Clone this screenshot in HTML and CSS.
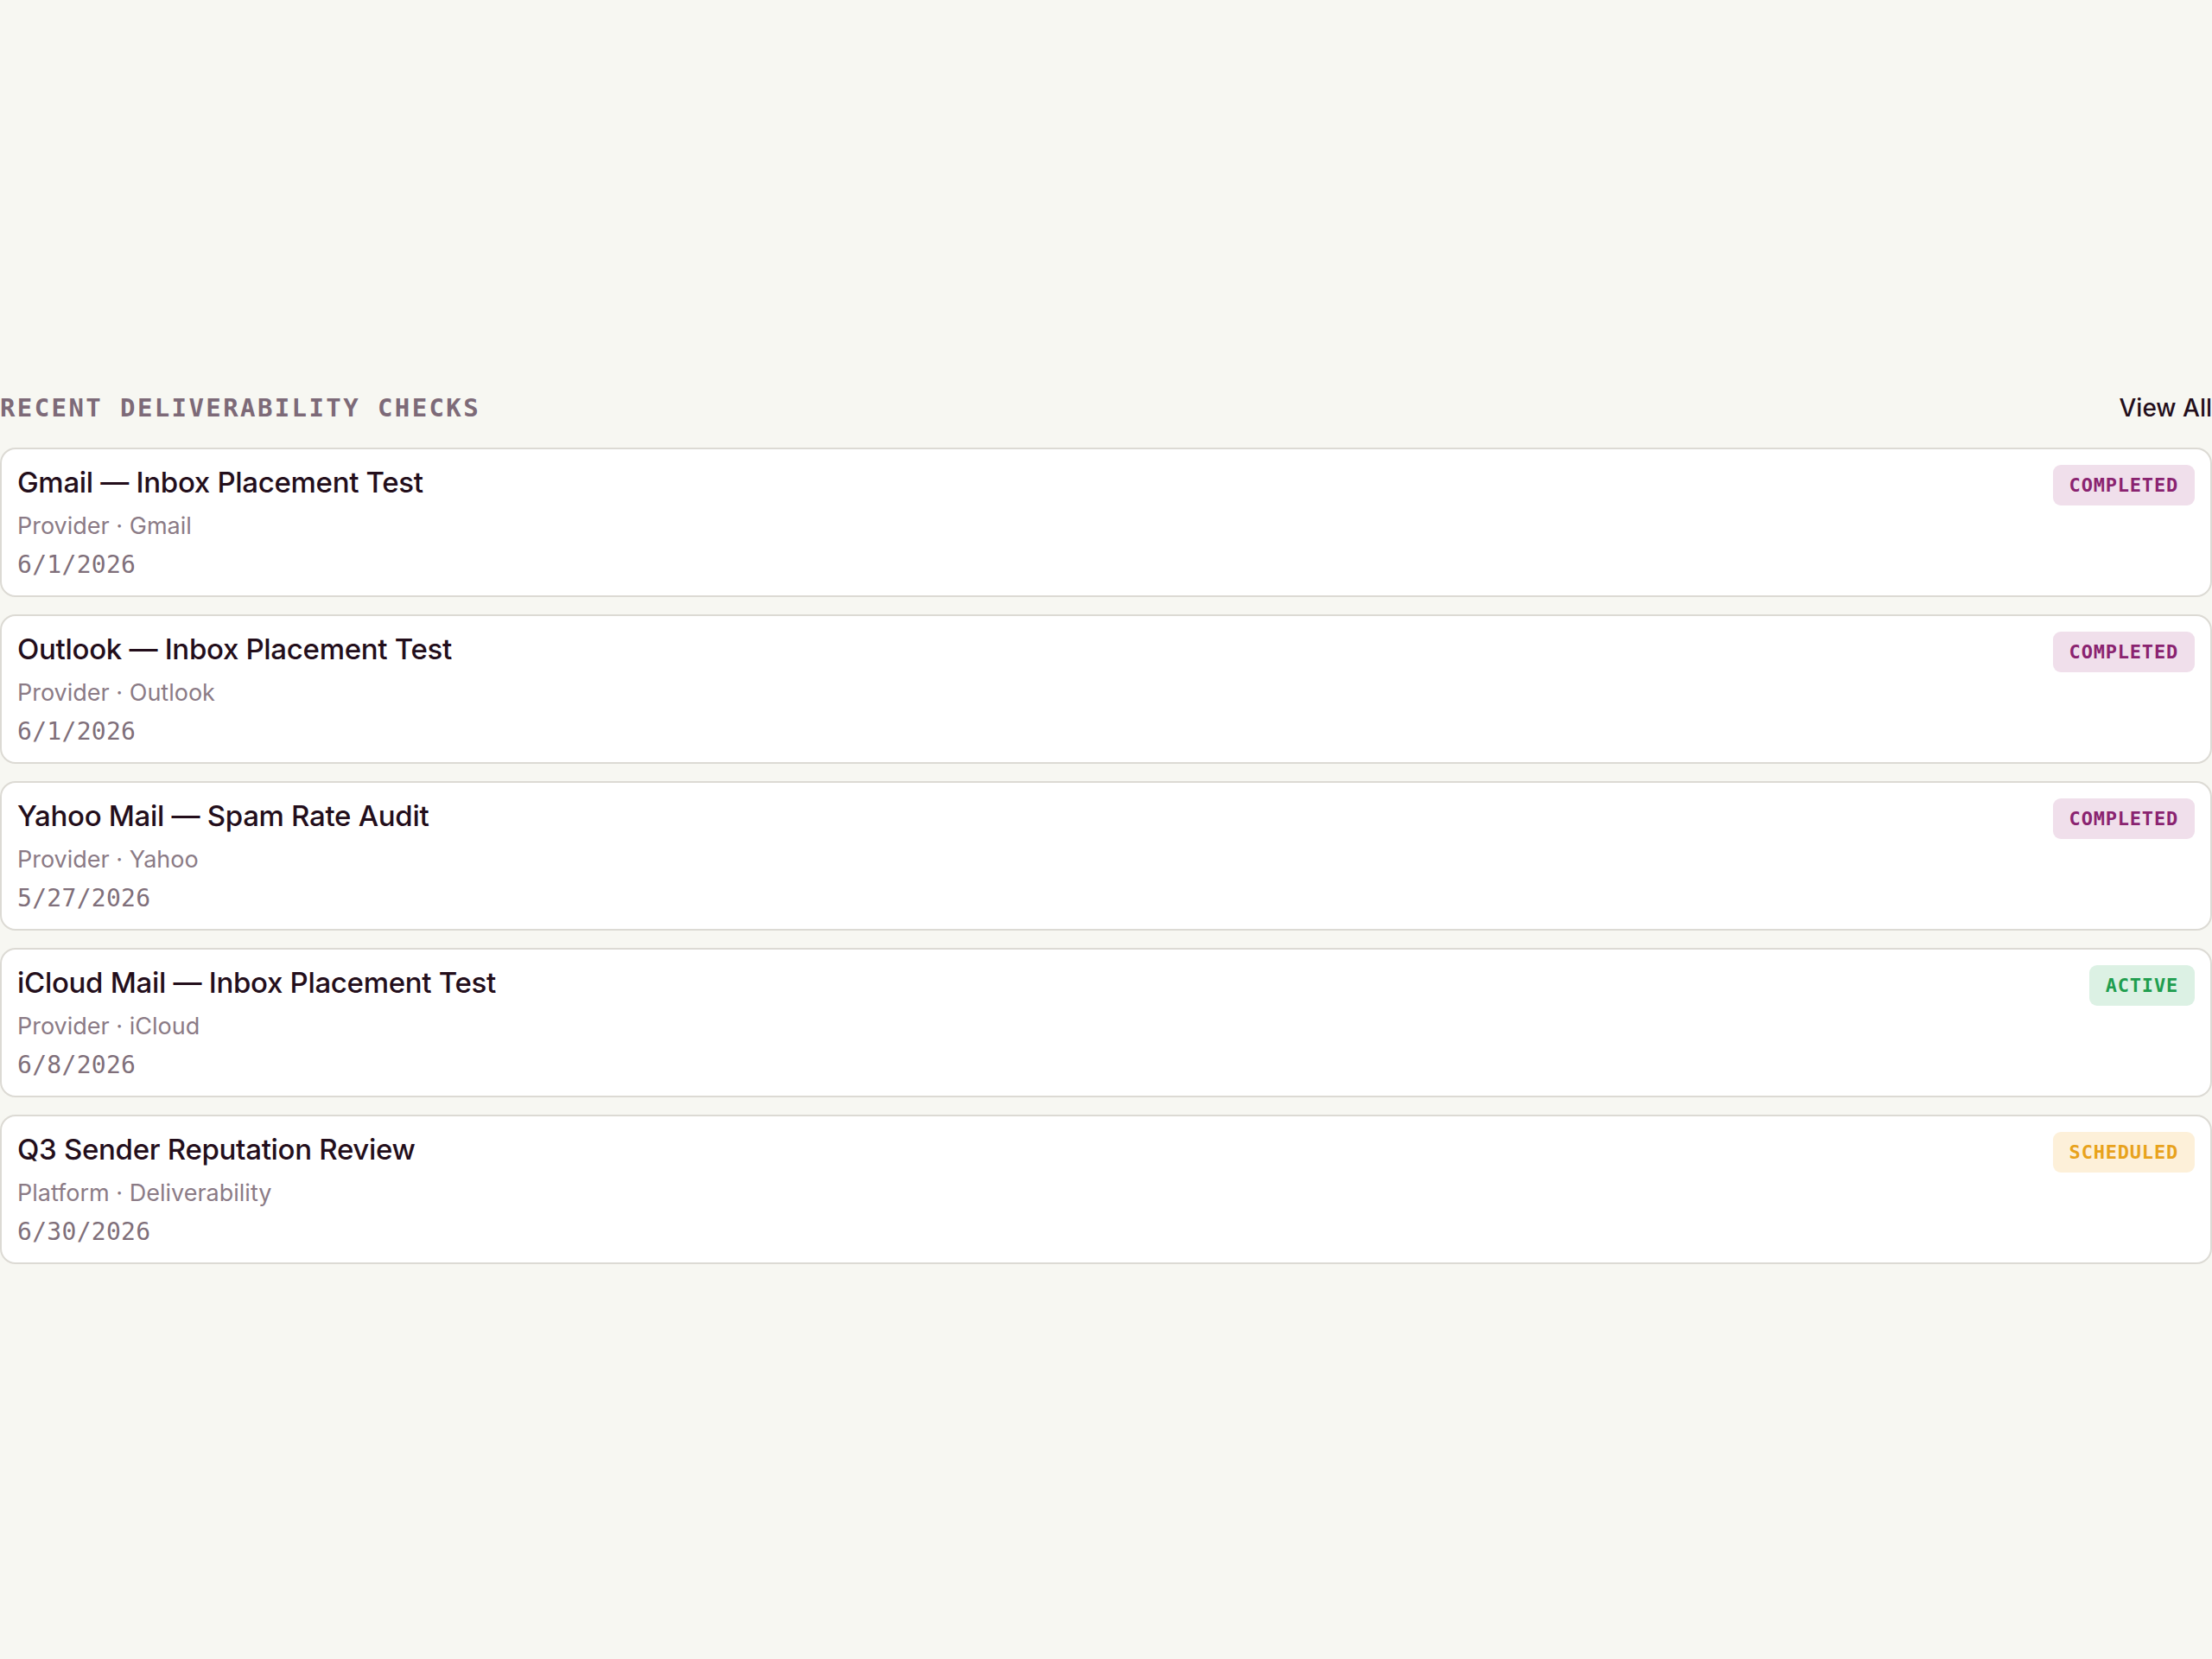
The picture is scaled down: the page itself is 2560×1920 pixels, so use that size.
FILE: index.html
```html
<!DOCTYPE html>
<html lang="en">
<head>
    <meta charset="UTF-8">
    <meta name="viewport" content="width=device-width, initial-scale=1.0">
    <title>Recent Deliverability Checks</title>
    <link rel="stylesheet" href="styles.css">
</head>
<body>
    <section class="checks">
        <div class="checks-header">
            <h2>Recent Deliverability Checks</h2>
            <a href="#" class="view-all">View All</a>
        </div>

        <div class="check-list">
            <div class="check-card">
                <div class="check-info">
                    <h3>Gmail — Inbox Placement Test</h3>
                    <p class="check-meta">Provider · Gmail</p>
                    <p class="check-date">6/1/2026</p>
                </div>
                <span class="badge completed">Completed</span>
            </div>

            <div class="check-card">
                <div class="check-info">
                    <h3>Outlook — Inbox Placement Test</h3>
                    <p class="check-meta">Provider · Outlook</p>
                    <p class="check-date">6/1/2026</p>
                </div>
                <span class="badge completed">Completed</span>
            </div>

            <div class="check-card">
                <div class="check-info">
                    <h3>Yahoo Mail — Spam Rate Audit</h3>
                    <p class="check-meta">Provider · Yahoo</p>
                    <p class="check-date">5/27/2026</p>
                </div>
                <span class="badge completed">Completed</span>
            </div>

            <div class="check-card">
                <div class="check-info">
                    <h3>iCloud Mail — Inbox Placement Test</h3>
                    <p class="check-meta">Provider · iCloud</p>
                    <p class="check-date">6/8/2026</p>
                </div>
                <span class="badge active">Active</span>
            </div>

            <div class="check-card">
                <div class="check-info">
                    <h3>Q3 Sender Reputation Review</h3>
                    <p class="check-meta">Platform · Deliverability</p>
                    <p class="check-date">6/30/2026</p>
                </div>
                <span class="badge scheduled">Scheduled</span>
            </div>
        </div>
    </section>
</body>
</html>
```

FILE: styles.css
```css
body {
    margin: 0;
    padding: 0;
    background: #f7f7f2;
    font-family: 'Inter', 'Noto Sans', sans-serif;
    color: #230e1b;
}
.checks {
    padding-top: 452px;
}
.checks-header {
    display: flex;
    justify-content: space-between;
    align-items: center;
    margin-bottom: 26px;
}
.checks-header h2 {
    margin: 0;
    font-family: 'DejaVu Sans Mono', monospace;
    font-size: 29px;
    font-weight: bold;
    letter-spacing: 2.4px;
    text-transform: uppercase;
    color: #7d6a78;
    line-height: 40px;
}
.view-all {
    font-size: 28px;
    font-weight: 500;
    color: #230e1b;
    text-decoration: none;
}
.check-list {
    display: flex;
    flex-direction: column;
    gap: 20px;
}
.check-card {
    display: flex;
    justify-content: space-between;
    align-items: flex-start;
    background: #ffffff;
    border: 2px solid #dcdad4;
    border-radius: 18px;
    padding: 18px 18px 19px;
}
.check-info h3 {
    margin: 0;
    font-size: 33px;
    font-weight: 500;
    line-height: 40px;
    letter-spacing: -0.3px;
}
.check-meta {
    margin: 11px 0 0;
    font-size: 27px;
    line-height: 40px;
    color: #8b7b86;
}
.check-date {
    margin: 8px 0 0;
    font-family: 'DejaVu Sans Mono', monospace;
    font-size: 28px;
    letter-spacing: 0.3px;
    color: #7f6f7a;
}
.badge {
    font-family: 'DejaVu Sans Mono', monospace;
    font-size: 22px;
    font-weight: bold;
    letter-spacing: 0.8px;
    text-transform: uppercase;
    padding: 11px 19px;
    border-radius: 9px;
}
.badge.completed {
    background: #f0dfeb;
    color: #8a2370;
}
.badge.active {
    background: #dcf1e4;
    color: #1f9e4f;
}
.badge.scheduled {
    background: #fdf0d9;
    color: #e8a21c;
}
```
